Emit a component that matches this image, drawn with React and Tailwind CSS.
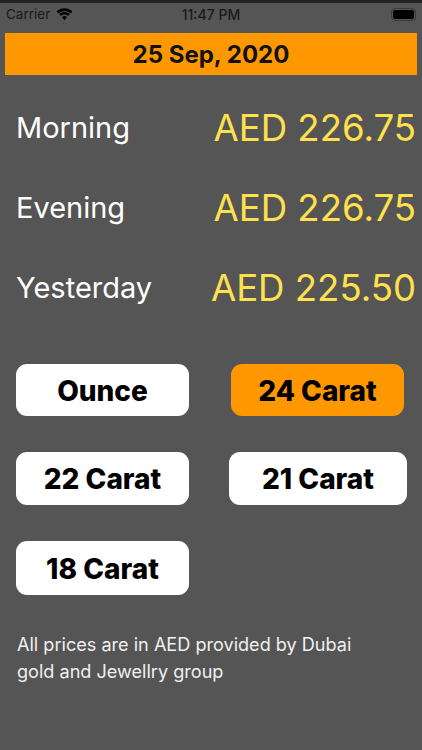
import React from "react";

const prices = [
  { label: "Morning", value: "AED 226.75" },
  { label: "Evening", value: "AED 226.75" },
  { label: "Yesterday", value: "AED 225.50" },
];

function CaratButton({ label, active, width = "w-[173px]", height = "h-[53px]" }) {
  return (
    <button
      className={`${width} ${height} rounded-[11px] pt-[1px] text-[28px] font-extrabold text-black ${
        active ? "bg-[#ff9800]" : "bg-white"
      }`}
    >
      {label}
    </button>
  );
}

export default function App() {
  return (
    <div className="h-[750px] w-[422px] overflow-hidden bg-[#555555] font-['Inter',sans-serif]">
      <div className="h-[3px] bg-[#222222]" />

      {/* status bar */}
      <div className="flex h-[23px] items-center justify-between px-[6px] text-[13.5px] text-[#1a1a1a]">
        <div className="flex w-[100px] items-center gap-[6px]">
          <span>Carrier</span>
          <svg width="17" height="13" viewBox="0 0 17 13" fill="#000000">
            <path d="M8.5 3c2.3 0 4.4.9 6 2.4l1.9-2C14.300 1.300 11.500.2 8.500.2S2.700 1.300.6 3.400l1.900 2C4.100 3.900 6.200 3 8.500 3z" />
            <path d="M8.500 6.600c1.300 0 2.500.5 3.400 1.400l1.800-2C12.300 4.700 10.500 4 8.500 4s-3.800.7-5.200 2l1.800 2c.9-.9 2.100-1.400 3.400-1.400z" />
            <path d="M8.500 8c-.9 0-1.800.4-2.400 1l2.400 3.200L10.900 9c-.6-.6-1.500-1-2.400-1z" />
          </svg>
        </div>
        <span className="text-[14px] font-medium">11:47 PM</span>
        <div className="flex w-[100px] justify-end">
          <div className="flex h-[13px] w-[25px] items-center justify-center rounded-[4px] border border-[#3a3a3a]">
            <div className="h-[9px] w-[21px] rounded-[2px] bg-black" />
          </div>
        </div>
      </div>

      <div className="mx-[5px] mt-[7px] flex h-[42px] w-[412px] items-center justify-center bg-[#ff9800] pt-[1px] text-[24px] font-bold text-[#111111]">
        25 Sep, 2020
      </div>

      <div className="mt-[13px] pl-[16px] pr-[6px]">
        {prices.map((row) => (
          <div key={row.label} className="flex h-[80px] items-center justify-between">
            <span className="text-[29px] text-white">{row.label}</span>
            <span className="text-[36.6px] text-[#ffe14d]">{row.value}</span>
          </div>
        ))}
      </div>

      <div className="mt-[36px] flex flex-col pl-[16px]">
        <div className="flex gap-[42px]">
          <CaratButton label="Ounce" height="h-[52px]" />
          <CaratButton label="24 Carat" active height="h-[52px]" />
        </div>
        <div className="mt-[36px] flex gap-[40px]">
          <CaratButton label="22 Carat" />
          <CaratButton label="21 Carat" width="w-[178px]" />
        </div>
        <div className="mt-[36px] flex">
          <CaratButton label="18 Carat" height="h-[54px]" />
        </div>
      </div>

      <p className="mt-[36px] w-[370px] pl-[17px] text-[18.100px] leading-[27px] text-[#f0f0f0]">
        All prices are in AED provided by Dubai gold and Jewellry group
      </p>
    </div>
  );
}
